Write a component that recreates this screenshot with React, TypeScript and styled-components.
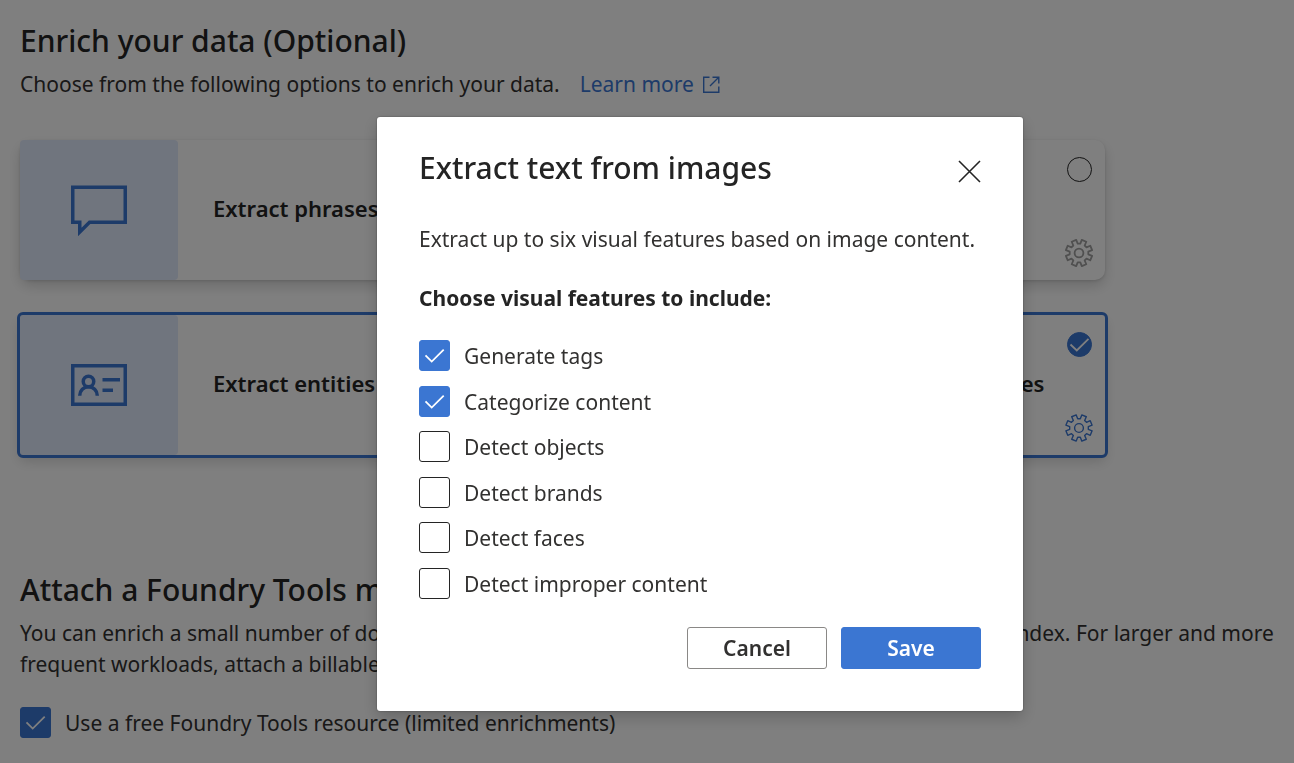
import React, { useId, useState } from "react";
import styled, { createGlobalStyle, css } from "styled-components";

const blue = "#3b76d2";
const ink = "#242424";
const bodyInk = "#323130";

const GlobalStyle = createGlobalStyle`
  * { box-sizing: border-box; }
  body {
    margin: 0;
    background: #ffffff;
    color: ${bodyInk};
    font-family: "Noto Sans", "Open Sans", sans-serif;
    font-size: 21px;
    line-height: 31px;
  }
  h1, h2, h3, p { margin: 0; }
`;

const Page = styled.main`
  padding: 20px 16px 20px 20px;
  display: flex;
  flex-direction: column;
  gap: 114px;
`;

const Section = styled.section`
  display: flex;
  flex-direction: column;
`;

const Heading = styled.h1`
  color: ${ink};
  font-size: 30px;
  line-height: 42px;
  font-weight: 500;
  margin-bottom: 7px;
`;

const LearnMore = styled.a`
  color: ${blue};
  text-decoration: none;
  display: inline-flex;
  align-items: center;
  gap: 8px;
  margin-left: 20px;
`;

const CardGrid = styled.div`
  display: grid;
  grid-template-columns: 1fr 1fr;
  gap: 35px 48px;
  max-width: 1085px;
  margin-top: 40px;
`;

const Card = styled.article<{ $selected: boolean }>`
  display: flex;
  height: 140px;
  border-radius: 10px;
  background: #ffffff;
  box-shadow: 0 1px 3px rgba(0, 0, 0, 0.12), 0 6px 13px rgba(0, 0, 0, 0.16);
  ${(p) =>
    p.$selected &&
    css`
      border-radius: 3px;
      outline: 3px solid ${blue};
    `}
`;

const CardArt = styled.div`
  width: 158px;
  display: grid;
  place-items: center;
  background: #e1eafd;
  border-radius: 4px;
  color: ${blue};
`;

const CardTitle = styled.h2`
  flex: 1;
  align-self: center;
  padding: 0 0 4px 35px;
  color: ${ink};
  font-size: 22px;
  line-height: 31px;
  font-weight: 600;
  white-space: nowrap;
`;

const CardTools = styled.div`
  width: 28px;
  margin: 17px 12px 13px 0;
  display: flex;
  flex-direction: column;
  align-items: center;
  justify-content: space-between;
`;

const IconButton = styled.button`
  padding: 0;
  border: 0;
  background: none;
  color: ${blue};
  display: grid;
  cursor: pointer;
  &:disabled {
    color: #a0a0a0;
    cursor: default;
  }
`;

const TickSlot = styled.span`
  display: inline-grid;
  flex: none;
  > * {
    grid-area: 1 / 1;
  }
  svg {
    pointer-events: none;
    color: #ffffff;
  }
`;

const Tick = styled.input<{ $round?: boolean }>`
  appearance: none;
  margin: 0;
  width: ${(p) => (p.$round ? 25 : 31)}px;
  height: ${(p) => (p.$round ? 25 : 31)}px;
  border: 1px solid ${ink};
  border-radius: ${(p) => (p.$round ? "50%" : "3px")};
  background: #ffffff;
  &:checked {
    border-color: ${blue};
    background: ${blue};
  }
`;

const TickRow = styled.label`
  display: flex;
  align-items: center;
  gap: 14px;
`;

const TickText = styled.span`
  padding-top: 2px;
  line-height: 29px;
`;

const FreeRow = styled.div`
  margin-top: 27px;
`;

const Overlay = styled.div`
  position: fixed;
  inset: 0;
  padding: 65px 0 0 106px;
  display: flex;
  align-items: center;
  justify-content: center;
  background: rgba(0, 0, 0, 0.5);
`;

const Dialog = styled.div`
  width: 646px;
  padding: 28px 42px 42px;
  background: #ffffff;
  border-radius: 3px;
  box-shadow: 0 0 2px rgba(0, 0, 0, 0.4), 0 6px 16px rgba(0, 0, 0, 0.2);
`;

const DialogHead = styled.header`
  display: flex;
  justify-content: space-between;
  align-items: flex-start;
  height: 79px;
`;

const DialogTitle = styled.h2`
  color: ${ink};
  font-size: 30px;
  line-height: 46px;
  font-weight: 500;
`;

const CloseButton = styled(IconButton)`
  color: ${ink};
  margin-top: 15px;
`;

const Legend = styled.h3`
  color: ${ink};
  font-size: 21px;
  line-height: 31px;
  font-weight: 700;
  margin: 28px 0 26px;
`;

const Features = styled.div`
  display: flex;
  flex-direction: column;
  justify-content: space-between;
  height: 259px;
`;

const Actions = styled.footer`
  display: flex;
  justify-content: flex-end;
  gap: 14px;
  margin-top: 28px;
`;

const Button = styled.button<{ $primary?: boolean }>`
  width: 140px;
  height: 42px;
  padding: 0;
  border: 1px solid ${(p) => (p.$primary ? blue : "#8a8886")};
  border-radius: 3px;
  background: ${(p) => (p.$primary ? blue : "#ffffff")};
  color: ${(p) => (p.$primary ? "#ffffff" : bodyInk)};
  font: inherit;
  font-weight: 600;
`;

function CheckMark({ round }: { round?: boolean }) {
  return round ? (
    <svg width="25" height="25" viewBox="0 0 25 25" fill="none" stroke="currentColor" strokeWidth="1.8">
      <path d="M3.5 12.5 9.8 18.5 21.5 6.8" />
    </svg>
  ) : (
    <svg width="31" height="31" viewBox="0 0 31 31" fill="none" stroke="currentColor" strokeWidth="1.8">
      <path d="M6.5 15.4 12.7 21.6 24.7 9.6" />
    </svg>
  );
}

function gearOutline() {
  const points: string[] = [];
  const at = (radius: number, degrees: number) => {
    const a = (degrees * Math.PI) / 180;
    points.push(`${(14 + radius * Math.sin(a)).toFixed(2)} ${(14 - radius * Math.cos(a)).toFixed(2)}`);
  };
  for (let notch = 0; notch < 360; notch += 45) {
    at(13.4, notch - 12);
    at(9.4, notch - 8);
    at(9.4, notch + 8);
    at(13.4, notch + 12);
  }
  return `M${points.join("L")}Z`;
}

function GearIcon({ bold }: { bold: boolean }) {
  return (
    <svg width="28" height="28" viewBox="0 0 28 28" fill="none" stroke="currentColor" strokeWidth={bold ? 1.8 : 1.4}>
      <path d={gearOutline()} strokeLinejoin="round" />
      <circle cx="14" cy="14" r="4.4" />
    </svg>
  );
}

function SpeechIcon() {
  return (
    <svg width="56" height="56" viewBox="0 0 16 16" fill="none" stroke="currentColor">
      <path d="M.5 1.5h15v10H5.3L2.5 14.3V11.5h-2z" />
    </svg>
  );
}

function IdentityIcon() {
  return (
    <svg width="56" height="56" viewBox="0 0 16 16" fill="none" stroke="currentColor">
      <path d="M.5 2.5h15v11H.5z" />
      <circle cx="5" cy="7" r="1.5" />
      <path d="M2.5 11.1V11a2.5 2.5 0 0 1 5 0v.1M9 6.5h5M9 9.5h3" />
    </svg>
  );
}

function OpenIcon() {
  return (
    <svg width="18" height="18" viewBox="0 0 18 18" fill="none" stroke="currentColor" strokeWidth="1.4">
      <path d="M7.5 1.2H1.7v15.1h15.1V10.5M10.5 1.2h6.3v6.3M16.5 1.5 8 10" />
    </svg>
  );
}

function EnrichmentCard(props: { title: string; icon: React.ReactNode; selected: boolean; ready: boolean; onSelect: () => void }) {
  return (
    <Card $selected={props.selected}>
      <CardArt>{props.icon}</CardArt>
      <CardTitle>{props.title}</CardTitle>
      <CardTools>
        <TickSlot>
          <Tick type="checkbox" $round aria-label={props.title} checked={props.ready} onChange={props.onSelect} />
          {props.ready && <CheckMark round />}
        </TickSlot>
        <IconButton type="button" aria-label={`${props.title} settings`} disabled={!props.ready}>
          <GearIcon bold={!props.ready} />
        </IconButton>
      </CardTools>
    </Card>
  );
}

function CheckOption({ label, initial }: { label: string; initial?: boolean }) {
  const id = useId();
  const [checked, setChecked] = useState(!!initial);
  return (
    <TickRow htmlFor={id}>
      <TickSlot>
        <Tick id={id} type="checkbox" checked={checked} onChange={() => setChecked(!checked)} />
        {checked && <CheckMark />}
      </TickSlot>
      <TickText>{label}</TickText>
    </TickRow>
  );
}

const cards = [
  { title: "Extract phrases", icon: <SpeechIcon /> },
  { title: "Detect language", icon: <SpeechIcon /> },
  { title: "Extract entities", icon: <IdentityIcon /> },
  { title: "Extract text from images", icon: <IdentityIcon /> },
];

const features = [
  { label: "Generate tags", initial: true },
  { label: "Categorize content", initial: true },
  { label: "Detect objects" },
  { label: "Detect brands" },
  { label: "Detect faces" },
  { label: "Detect improper content" },
];

export default function App() {
  const [selected, setSelected] = useState([false, false, true, true]);
  const toggle = (index: number) => setSelected(selected.map((on, i) => (i === index ? !on : on)));

  return (
    <>
      <GlobalStyle />
      <Page>
        <Section>
          <Heading>Enrich your data (Optional)</Heading>
          <p>
            Choose from the following options to enrich your data.
            <LearnMore href="#learn-more">
              Learn more <OpenIcon />
            </LearnMore>
          </p>
          <CardGrid>
            {cards.map((card, i) => (
              <EnrichmentCard
                key={card.title}
                title={card.title}
                icon={card.icon}
                selected={selected[i]}
                ready={selected[i]}
                onSelect={() => toggle(i)}
              />
            ))}
          </CardGrid>
        </Section>
        <Section>
          <Heading as="h2">Attach a Foundry Tools multi-service resource</Heading>
          <p>
            You can enrich a small number of documents for free, up to 20 documents per day for each selected index. For
            larger and more frequent workloads, attach a billable resource.
          </p>
          <FreeRow>
            <CheckOption label="Use a free Foundry Tools resource (limited enrichments)" initial />
          </FreeRow>
        </Section>
      </Page>
      <Overlay>
        <Dialog role="dialog" aria-modal="true" aria-labelledby="dialog-title">
          <DialogHead>
            <DialogTitle id="dialog-title">Extract text from images</DialogTitle>
            <CloseButton type="button" aria-label="Close">
              <svg width="23" height="23" viewBox="0 0 23 23" fill="none" stroke="currentColor" strokeWidth="1.6">
                <path d="M1 1 22 22M22 1 1 22" />
              </svg>
            </CloseButton>
          </DialogHead>
          <p>Extract up to six visual features based on image content.</p>
          <Legend>Choose visual features to include:</Legend>
          <Features>
            {features.map((feature) => (
              <CheckOption key={feature.label} label={feature.label} initial={feature.initial} />
            ))}
          </Features>
          <Actions>
            <Button type="button">Cancel</Button>
            <Button type="button" $primary>
              Save
            </Button>
          </Actions>
        </Dialog>
      </Overlay>
    </>
  );
}
